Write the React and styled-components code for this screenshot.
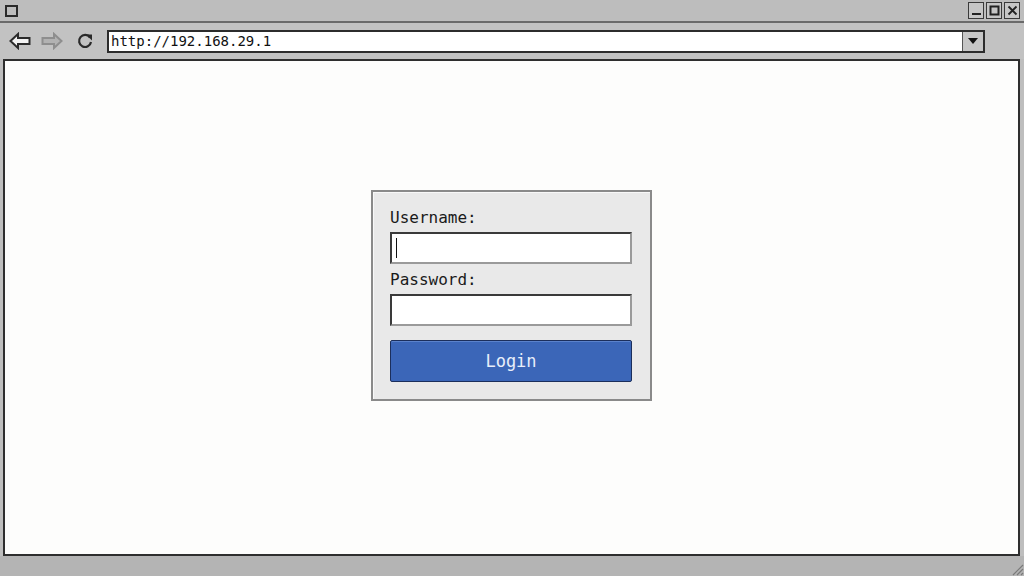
import React from 'react'
import styled, { createGlobalStyle } from 'styled-components'

const GlobalStyle = createGlobalStyle`
  html, body {
    margin: 0;
    padding: 0;
    width: 1024px;
    height: 576px;
    overflow: hidden;
    background: #bdbdbd;
  }
  * {
    box-sizing: border-box;
  }
`

const mono = `"DejaVu Sans Mono", "Liberation Mono", monospace`

const Window = styled.div`
  width: 1024px;
  height: 576px;
  display: flex;
  flex-direction: column;
  background: #bebebe;
  font-family: ${mono};
`

const TitleBar = styled.div`
  height: 23px;
  display: flex;
  align-items: center;
  justify-content: space-between;
  padding: 0 4px 0 5px;
  background: #bdbdbd;
  border-bottom: 2px solid #6a6a6a;
`

const WinIcon = styled.div`
  width: 13px;
  height: 12px;
  border: 2px solid #2a2a2a;
`

const WinButtons = styled.div`
  display: flex;
  gap: 2px;
`

const WinButton = styled.div`
  width: 16px;
  height: 17px;
  border: 1px solid #3a3a3a;
  background: #c6c6c6;
  display: flex;
  align-items: center;
  justify-content: center;
`

const Toolbar = styled.div`
  height: 36px;
  display: flex;
  align-items: center;
  padding: 0 39px 0 8px;
  background: #c2c2c2;
`

const NavButton = styled.div`
  width: 24px;
  height: 24px;
  display: flex;
  align-items: center;
  justify-content: center;
  margin-right: ${(p) => p.mr || 8}px;
`

const AddressBar = styled.div`
  flex: 1;
  height: 23px;
  display: flex;
  border: 2px solid #2c2c2c;
  background: #ffffff;
`

const AddressText = styled.div`
  flex: 1;
  font-size: 14px;
  line-height: 19px;
  padding-left: 2px;
  color: #111;
`

const DropButton = styled.div`
  width: 21px;
  border-left: 1px solid #555;
  background: #c6c6c6;
  display: flex;
  align-items: center;
  justify-content: center;
`

const Viewport = styled.div`
  flex: 1;
  margin: 0 4px 0 3px;
  border: 2px solid #2e2e2e;
  background: #fdfdfc;
  display: flex;
  align-items: center;
  justify-content: center;
  padding-bottom: 24px;
`

const LoginBox = styled.div`
  width: 281px;
  padding: 17px 18px 17px 17px;
  background: #e9e9e9;
  border: 2px solid #8a8a8a;
  box-shadow: inset 1px 1px 0 #f8f8f8;
  display: flex;
  flex-direction: column;
`

const Label = styled.div`
  font-size: 16px;
  line-height: 18px;
  color: #1a1a1a;
  margin-bottom: 5px;
  margin-top: ${(p) => p.mt || 0}px;
`

const Field = styled.div`
  height: 32px;
  background: #fff;
  border: 2px solid #3a3a3a;
  border-right-color: #9a9a9a;
  border-bottom-color: #9a9a9a;
  display: flex;
  align-items: center;
  padding-left: 4px;
`

const Caret = styled.div`
  width: 1px;
  height: 20px;
  background: #111;
`

const LoginButton = styled.div`
  margin-top: 14px;
  height: 42px;
  background: #3b66b8;
  border: 1px solid #1c2f5c;
  border-radius: 2px;
  box-shadow: inset 0 1px 0 #5a82cc;
  display: flex;
  align-items: center;
  justify-content: center;
  color: #e8eefa;
  font-size: 17px;
`

const StatusBar = styled.div`
  height: 20px;
  background: #b4b4b4;
  display: flex;
  justify-content: flex-end;
  align-items: flex-end;
`

const Grip = () => (
  <svg width="14" height="14" viewBox="0 0 14 14">
    <path d="M13 3L3 13M13 7L7 13M13 11L11 13" stroke="#7a7a7a" strokeWidth="1.2" />
  </svg>
)

const BackIcon = ({ color, fill }) => (
  <svg width="22" height="18" viewBox="0 0 22 18">
    <path d="M1.5 9L9 2V6H20.5V12H9V16Z" fill={fill} stroke={color} strokeWidth="2" />
  </svg>
)

const ForwardIcon = ({ color, fill }) => (
  <svg width="22" height="18" viewBox="0 0 22 18">
    <path d="M20.5 9L13 2V6H1.5V12H13V16Z" fill={fill} stroke={color} strokeWidth="2" />
  </svg>
)

const ReloadIcon = () => (
  <svg width="20" height="20" viewBox="0 0 20 20">
    <path d="M15 6.5A6 6 0 1 0 16 11" fill="none" stroke="#2a2a2a" strokeWidth="2.2" />
    <path d="M11 3.5H17V9.5Z" fill="#2a2a2a" />
  </svg>
)

export default function App() {
  return (
    <>
      <GlobalStyle />
      <Window>
        <TitleBar>
          <WinIcon />
          <WinButtons>
            <WinButton>
              <svg width="11" height="11" viewBox="0 0 11 11">
                <rect x="1" y="8" width="9" height="2" fill="#222" />
              </svg>
            </WinButton>
            <WinButton>
              <svg width="11" height="11" viewBox="0 0 11 11">
                <rect x="1.5" y="1.5" width="8" height="8" fill="none" stroke="#222" strokeWidth="2" />
              </svg>
            </WinButton>
            <WinButton>
              <svg width="11" height="11" viewBox="0 0 11 11">
                <path d="M1.5 1.5L9.5 9.5M9.5 1.5L1.5 9.5" stroke="#222" strokeWidth="1.8" />
              </svg>
            </WinButton>
          </WinButtons>
        </TitleBar>
        <Toolbar>
          <NavButton mr={8}>
            <BackIcon color="#2a2a2a" fill="#f2f2f2" />
          </NavButton>
          <NavButton mr={9}>
            <ForwardIcon color="#8e8e8e" fill="#b2b2b2" />
          </NavButton>
          <NavButton mr={10}>
            <ReloadIcon />
          </NavButton>
          <AddressBar>
            <AddressText>http://192.168.29.1</AddressText>
            <DropButton>
              <svg width="10" height="7" viewBox="0 0 10 7">
                <path d="M0 0H10L5 6Z" fill="#111" />
              </svg>
            </DropButton>
          </AddressBar>
        </Toolbar>
        <Viewport>
          <LoginBox>
            <Label>Username:</Label>
            <Field>
              <Caret />
            </Field>
            <Label mt={7}>Password:</Label>
            <Field />
            <LoginButton>Login</LoginButton>
          </LoginBox>
        </Viewport>
        <StatusBar>
          <Grip />
        </StatusBar>
      </Window>
    </>
  )
}
